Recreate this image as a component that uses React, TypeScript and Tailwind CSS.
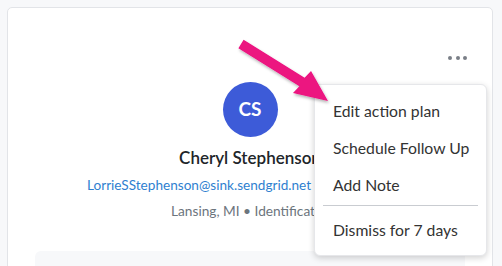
export default function App() {
  return (
    <div
      className="relative h-[266px] w-[502px] overflow-hidden bg-[#f7f8fa] pl-[7px] pt-[7px]"
      style={{ fontFamily: "Lato, 'Noto Sans', sans-serif" }}
    >
      {/* Profile card */}
      <div className="relative h-[300px] w-[486px] rounded-[5px] border border-[#e2e4e8] bg-white">
        <div className="flex justify-end pr-[25px] pt-[40px]">
          <button className="flex h-[20px] w-[19px] items-center justify-between">
            <span className="h-[4px] w-[4px] rounded-full bg-[#7a7f87]" />
            <span className="h-[4px] w-[4px] rounded-full bg-[#7a7f87]" />
            <span className="h-[4px] w-[4px] rounded-full bg-[#7a7f87]" />
          </button>
        </div>

        <div className="flex flex-col items-center">
          <div className="mt-[14px] flex h-[55px] w-[55px] items-center justify-center rounded-full bg-[#3d5bd8] text-[19px] font-bold text-white">
            CS
          </div>
          <div className="mt-[8px] whitespace-nowrap text-[17px] font-semibold leading-[26px] text-[#212529]">
            Cheryl Stephenson
          </div>
          <div className="mt-[4px] w-[326px] whitespace-nowrap text-[13.6px] leading-[20px] text-[#2f7fd0]">
            LorrieSStephenson@sink.sendgrid.net
          </div>
          <div className="mt-[6px] w-[158px] whitespace-nowrap text-[13.7px] leading-[20px] text-[#6c757d]">
            Lansing, MI • Identification
          </div>
        </div>

        <div className="mx-[27px] mt-[30px] h-[40px] rounded-t-[6px] bg-[#f7f8fa]" />

        {/* Dropdown menu */}
        <div className="absolute left-[306px] top-[76px] w-[173px] rounded-[6px] border border-[#e6e7ea] bg-white py-[7px] text-[15.75px] text-[#333333] shadow-[0_2px_6px_rgba(0,0,0,0.18)]">
          <div className="flex h-[37px] items-center whitespace-nowrap px-[18px]">Edit action plan</div>
          <div className="flex h-[37px] items-center whitespace-nowrap px-[18px]">Schedule Follow Up</div>
          <div className="flex h-[37px] items-center whitespace-nowrap px-[18px]">Add Note</div>
          <div className="mx-[8px] mb-[5px] mt-[2px] h-px bg-[#c9ccd1]" />
          <div className="flex h-[37px] items-center whitespace-nowrap px-[18px]">Dismiss for 7 days</div>
        </div>
      </div>

      {/* Annotation arrow */}
      <svg
        className="pointer-events-none absolute left-0 top-0"
        width="502"
        height="266"
        viewBox="0 0 502 266"
      >
        <defs>
          <filter id="arrowShadow" x="-20%" y="-20%" width="140%" height="140%">
            <feDropShadow dx="1" dy="2" stdDeviation="1.5" floodColor="#000" floodOpacity="0.3" />
          </filter>
        </defs>
        <polygon
          points="243.6,39.8 304.6,77.8 311,71 328,101 293,93 299.4,86.2 238.4,48.2"
          fill="#ec1280"
          filter="url(#arrowShadow)"
        />
      </svg>
    </div>
  );
}
